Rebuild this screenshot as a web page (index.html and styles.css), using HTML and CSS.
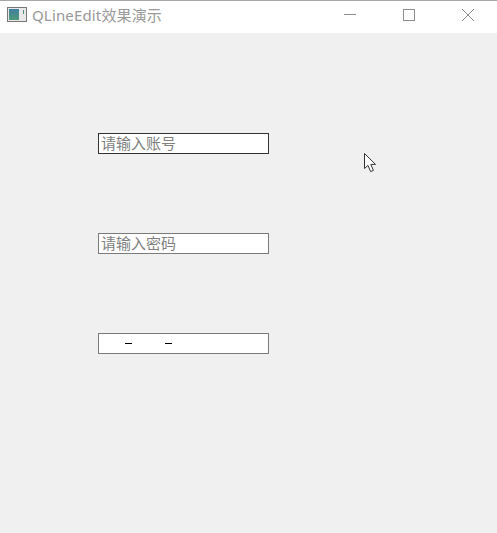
FILE: index.html
```html
<!DOCTYPE html>
<html lang="en">
<head>
    <meta charset="UTF-8">
    <meta name="viewport" content="width=device-width, initial-scale=1.0">
    <title>QLineEdit效果演示</title>
    <link rel="stylesheet" href="styles.css">
</head>
<body>
    <div class="window">
        <div class="titlebar">
            <svg class="app-icon" width="20" height="16" viewBox="0 0 20 16">
                <defs>
                    <linearGradient id="pane" x1="0" y1="0" x2="0" y2="1">
                        <stop offset="0" stop-color="#3f7fa0"/>
                        <stop offset="1" stop-color="#4f9a78"/>
                    </linearGradient>
                </defs>
                <rect x="0.5" y="0.5" width="19" height="14" fill="#e8e8e8" stroke="#777"/>
                <rect x="2" y="2" width="10" height="11" fill="url(#pane)"/>
                <rect x="16" y="3" width="1" height="4" fill="#4f8f80"/>
            </svg>
            <span class="title">QLineEdit效果演示</span>
            <div class="win-buttons">
                <svg class="win-btn" width="46" height="32" viewBox="0 0 46 32">
                    <path d="M17 13.5H29" stroke="#8c8c8c" fill="none"/>
                </svg>
                <svg class="win-btn" width="46" height="32" viewBox="0 0 46 32">
                    <rect x="17.5" y="8.5" width="11" height="11" stroke="#8c8c8c" fill="none"/>
                </svg>
                <svg class="win-btn" width="46" height="32" viewBox="0 0 46 32">
                    <path d="M17 8L29 20M29 8L17 20" stroke="#8c8c8c" fill="none"/>
                </svg>
            </div>
        </div>
        <div class="content">
            <div class="line-edit focused">请输入账号</div>
            <div class="line-edit">请输入密码</div>
            <div class="line-edit masked"><span class="dash"></span><span class="dash"></span></div>
        </div>
        <svg class="cursor" width="14" height="22" viewBox="0 0 14 22">
            <path d="M1.5 1.5V16.5L5 13.4L7.6 19.6L10.4 18.4L7.8 12.4H12.5Z" fill="#fff" stroke="#333"/>
        </svg>
    </div>
</body>
</html>
```

FILE: styles.css
```css
body {
    margin: 0;
    padding: 0;
    font-family: "Noto Sans", "Noto Sans CJK SC", sans-serif;
}
.window {
    position: relative;
    height: 533px;
    background: #f0f0f0;
    overflow: hidden;
}
.titlebar {
    display: flex;
    align-items: center;
    height: 32px;
    background: #fff;
    border-top: 1px solid #a8a8a8;
}
.app-icon {
    margin-left: 7px;
    margin-right: 5px;
    margin-top: -5px;
}
.title {
    font-size: 15px;
    letter-spacing: 0.15px;
    color: #999;
    margin-top: -6px;
}
.win-buttons {
    display: flex;
    margin-left: auto;
    margin-right: 6px;
}
.win-btn {
    display: block;
    margin-left: 13px;
}
.content {
    display: flex;
    flex-direction: column;
    gap: 79px;
    padding: 100px 0 0 98px;
}
.line-edit {
    box-sizing: border-box;
    display: flex;
    align-items: center;
    width: 171px;
    height: 21px;
    padding: 0 0 2px 2px;
    background: #fff;
    border: 1px solid #7a7a7a;
    font-family: "Noto Sans CJK SC", sans-serif;
    font-size: 15px;
    color: #808080;
}
.line-edit.focused {
    border-color: #333;
}
.line-edit.masked {
    padding: 0 0 0 26px;
    gap: 33px;
}
.dash {
    width: 7px;
    height: 1px;
    background: #000;
}
.cursor {
    position: absolute;
    left: 363px;
    top: 152px;
}
```
